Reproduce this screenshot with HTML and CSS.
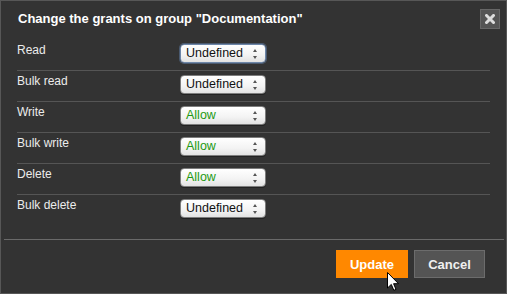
FILE: index.html
```
<!DOCTYPE html>
<html>
<head>
<meta charset="utf-8">
<link rel="stylesheet" href="styles.css">
</head>
<body>
<div class="dialog">
  <div class="header">
    <div class="title">Change the grants on group "Documentation"</div>
    <div class="close">
      <svg width="10" height="10" viewBox="0 0 10 10"><path d="M1.5 1.5 L8.5 8.5 M8.5 1.5 L1.5 8.5" stroke="#dcdcdc" stroke-width="3" stroke-linecap="square"/></svg>
    </div>
  </div>
  <div class="rows">
    <div class="row"><div class="label">Read</div><div class="select focus"><span class="val undef">Undefined</span><span class="arrows"></span></div></div>
    <div class="row"><div class="label">Bulk read</div><div class="select"><span class="val undef">Undefined</span><span class="arrows"></span></div></div>
    <div class="row"><div class="label">Write</div><div class="select"><span class="val allow">Allow</span><span class="arrows"></span></div></div>
    <div class="row"><div class="label">Bulk write</div><div class="select"><span class="val allow">Allow</span><span class="arrows"></span></div></div>
    <div class="row"><div class="label">Delete</div><div class="select"><span class="val allow">Allow</span><span class="arrows"></span></div></div>
    <div class="row last"><div class="label">Bulk delete</div><div class="select"><span class="val undef">Undefined</span><span class="arrows"></span></div></div>
  </div>
  <div class="footer">
    <div class="btn update">Update</div>
    <div class="btn cancel">Cancel</div>
  </div>
  <svg class="cursor" width="13" height="20" viewBox="0 0 13 20"><path d="M0.5 0.5 L0.5 16 L4.3 12.4 L6.8 18.3 L9 17.4 L6.6 11.7 L11.5 11.7 Z" fill="#fff" stroke="#000" stroke-width="1" stroke-linejoin="miter"/></svg>
</div>
</body>
</html>
```
FILE: styles.css
```
html, body {
  margin: 0;
  padding: 0;
  background: #333333;
}
.dialog {
  position: relative;
  width: 507px;
  height: 294px;
  box-sizing: border-box;
  border: 1px solid #575757;
  background: #333333;
  font-family: "Liberation Sans", Arial, sans-serif;
  overflow: hidden;
}
.header {
  display: flex;
  align-items: flex-start;
  height: 39px;
  box-sizing: border-box;
  padding: 8px 6px 0 17px;
}
.title {
  margin-top: 2px;
  font-size: 13px;
  line-height: 15px;
  font-weight: bold;
  color: #ffffff;
}
.close {
  margin-left: auto;
  width: 20px;
  height: 20px;
  box-sizing: border-box;
  background: #545454;
  border: 1px solid #676767;
  display: flex;
  align-items: center;
  justify-content: center;
}
.close svg { display: block; }
.rows {
  margin-left: 16px;
  width: 473px;
}
.row {
  display: flex;
  align-items: flex-start;
  height: 31px;
  box-sizing: border-box;
  border-bottom: 1px solid #555555;
}
.row.last {
  border-bottom: none;
  height: 30px;
}
.label {
  width: 163px;
  padding-top: 3px;
  font-size: 12px;
  line-height: 14px;
  color: #ececec;
}
.select {
  position: relative;
  margin-top: 4px;
  width: 86px;
  height: 19px;
  box-sizing: border-box;
  border: 1px solid #7d7d7d;
  border-radius: 4px;
  background: linear-gradient(#ffffff, #f3f3f3 60%, #e2e2e2);
  box-shadow: 0 1px 0 #222;
  padding-left: 5px;
  font-size: 12.5px;
  line-height: 17px;
}
.select.focus {
  border-color: #6d86a8;
  box-shadow: 0 0 0 1px #4a5a70;
}
.val.undef { color: #111111; }
.val.allow { color: #1f9a12; }
.arrows {
  position: absolute;
  right: 7px;
  top: 4px;
  width: 5px;
  height: 10px;
}
.arrows::before, .arrows::after {
  content: "";
  position: absolute;
  left: 0;
  border-left: 2.5px solid transparent;
  border-right: 2.5px solid transparent;
}
.arrows::before {
  top: 0;
  border-bottom: 3px solid #555;
}
.arrows::after {
  bottom: 0;
  border-top: 3px solid #555;
}
.footer {
  margin: 14px 2px 0 3px;
  border-top: 1px solid #6a6a6a;
  display: flex;
  justify-content: flex-end;
  gap: 6px;
  padding: 10px 19px 0 0;
}
.btn {
  height: 28px;
  box-sizing: border-box;
  font-size: 13px;
  font-weight: bold;
  line-height: 15px;
  display: flex;
  align-items: center;
  justify-content: center;
}
.update {
  width: 72px;
  background: #ff8800;
  color: #ffffff;
}
.cancel {
  width: 71px;
  background: #545454;
  border: 1px solid #6c6c6c;
  color: #f0f0f0;
}
.cursor {
  position: absolute;
  left: 386px;
  top: 271px;
}
```
